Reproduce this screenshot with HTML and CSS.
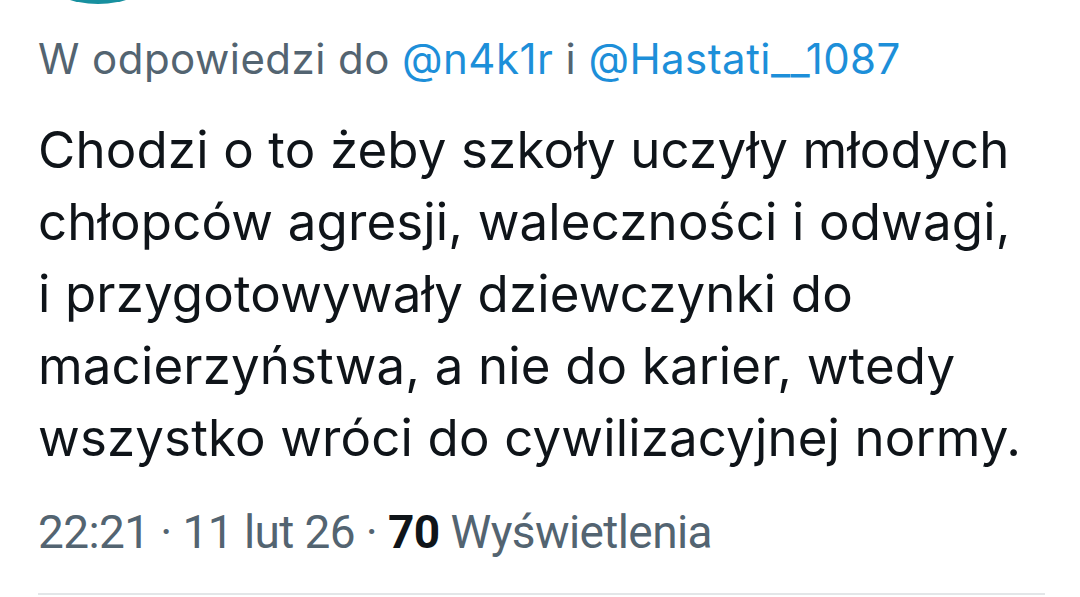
FILE: index.html
```html
<!DOCTYPE html>
<html lang="pl">
<head>
<meta charset="utf-8">
<link rel="stylesheet" href="styles.css">
</head>
<body>
<div class="tweet">
  <svg class="avatar" width="120" height="6" viewBox="0 0 120 6"><circle cx="60" cy="-96" r="100" fill="#17909f"/></svg>
  <div class="reply">W odpowiedzi do <span class="link">@n4k1r</span> i <span class="link">@Hastati__1087</span></div>
  <div class="text">Chodzi o to żeby szkoły uczyły młodych<br>chłopców agresji, waleczności i odwagi,<br>i przygotowywały dziewczynki do<br>macierzyństwa, a nie do karier, wtedy<br>wszystko wróci do cywilizacyjnej normy.</div>
  <div class="meta">22:21 · 11 lut 26 · <b>70</b> Wyświetlenia</div>
  <div class="divider"></div>
</div>
</body>
</html>
```
FILE: styles.css
```css
html, body { margin: 0; padding: 0; background: #fff; }
.tweet {
  width: 1080px;
  height: 597px;
  overflow: hidden;
  padding: 0 35px 0 38px;
  box-sizing: border-box;
  display: flex;
  flex-direction: column;
}
.avatar { display: block; flex: none; }
.reply {
  margin-top: 28px;
  font-family: Inter, "Noto Sans", sans-serif;
  font-size: 42px;
  line-height: 50px;
  letter-spacing: 0.45px;
  color: #536471;
  white-space: nowrap;
}
.link { color: #1d8fd9; }
.text {
  margin-top: 30px;
  font-family: Inter, "Noto Sans", sans-serif;
  font-size: 51px;
  line-height: 72px;
  letter-spacing: 0.15px;
  color: #0f1419;
  white-space: nowrap;
}
.meta {
  margin-top: 30px;
  font-family: Roboto, sans-serif;
  font-size: 46px;
  line-height: 56px;
  letter-spacing: -0.6px;
  color: #536471;
  white-space: nowrap;
}
.meta b { color: #0f1419; font-weight: 700; }
.divider {
  margin-top: 33px;
  height: 2px;
  flex: none;
  background: #e3e6e8;
}
```
